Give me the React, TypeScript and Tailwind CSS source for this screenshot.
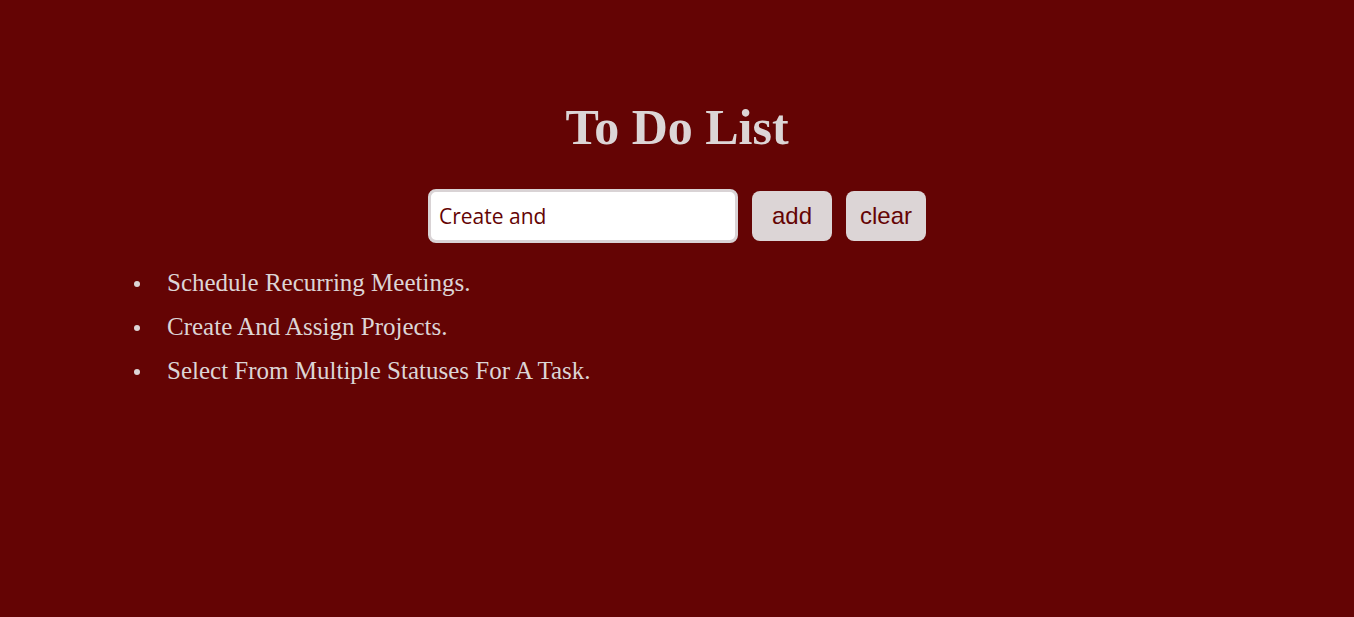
import { useState } from "react";

const initialTasks = [
  "Schedule Recurring Meetings.",
  "Create And Assign Projects.",
  "Select From Multiple Statuses For A Task.",
];

export default function App() {
  const [text, setText] = useState("Create and");
  const [tasks, setTasks] = useState(initialTasks);

  const addTask = () => {
    if (!text.trim()) return;
    setTasks([...tasks, text.trim()]);
    setText("");
  };

  return (
    <div className="min-h-screen bg-[#640404] pt-[97px] font-['Liberation_Serif',serif] text-[#dcd5d6]">
      <h1 className="text-center text-[50px] font-bold leading-[60px]">To Do List</h1>

      <div className="mt-[32px] flex items-center justify-center gap-[14px]">
        <input
          type="text"
          value={text}
          onChange={(e) => setText(e.target.value)}
          className="h-[54px] w-[310px] rounded-[8px] border-[3px] border-[#d9d3d5] bg-white px-[8px] font-['Open_Sans',sans-serif] text-[21px] font-medium text-[#640404] outline-none"
        />
        <button
          onClick={addTask}
          className="h-[50px] w-[80px] rounded-[8px] bg-[#dcd5d6] font-['Liberation_Sans',sans-serif] text-[24px] text-[#640404]"
        >
          add
        </button>
        <button
          onClick={() => setTasks([])}
          className="h-[50px] w-[80px] rounded-[8px] bg-[#dcd5d6] font-['Liberation_Sans',sans-serif] text-[24px] text-[#640404]"
        >
          clear
        </button>
      </div>

      <ul className="mt-[18px] pl-[134px] text-[25px] leading-[44px]">
        {tasks.map((task, i) => (
          <li key={i} className="flex items-center gap-[27px]">
            <span className="mt-[2px] h-[6px] w-[6px] shrink-0 rounded-full bg-[#dcd5d6]" />
            <span>{task}</span>
          </li>
        ))}
      </ul>
    </div>
  );
}
